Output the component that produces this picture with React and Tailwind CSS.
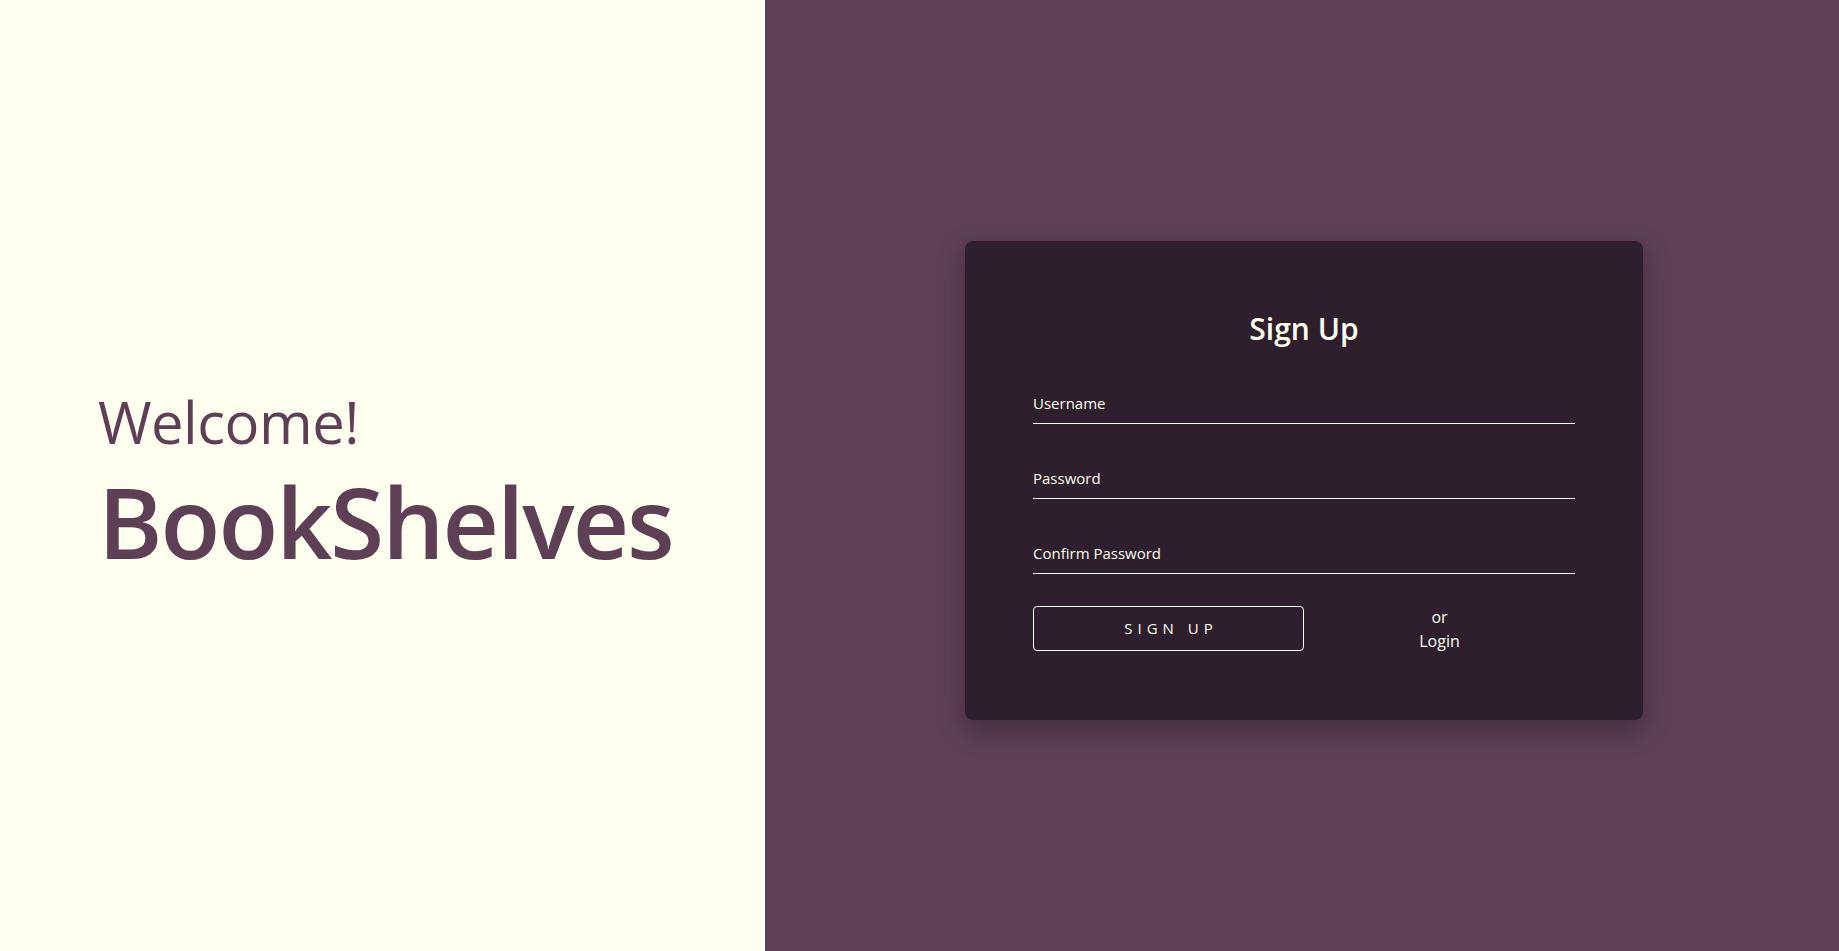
import { useState } from "react";

const Field = ({ name, type, placeholder }) => {
  return (
    <div className="mb-[35px]">
      <input
        className="block w-full h-[40px] bg-transparent border-b border-[#fffff0] text-[15px] text-[#fffff0] placeholder:text-[#fffff0] outline-none"
        name={name}
        type={type}
        placeholder={placeholder}
      />
    </div>
  );
};

const App = () => {
  const [form, setForm] = useState({});

  const handleSubmit = (e) => {
    e.preventDefault();
    setForm({ username: e.target.username.value });
  };

  return (
    <div
      className="flex w-full h-screen"
      style={{ fontFamily: '"Open Sans", "Noto Sans", sans-serif' }}
    >
      {/* left welcome panel */}
      <div className="w-[765px] shrink-0 h-full bg-[#fffff0] flex flex-col justify-center pl-[98px] text-[#5d4054]">
        <h2 className="text-[58px] font-normal leading-[1.2] mt-[16px] tracking-[-0.5px]">Welcome!</h2>
        <h1 className="text-[98px] font-semibold leading-[1.2] mt-[6px] tracking-[-2px]">
          BookShelves
        </h1>
      </div>

      {/* right form panel */}
      <div className="flex-1 h-full bg-[#5d4054] flex items-center justify-center">
        <div className="w-[678px] ml-[4px] mt-[9px] bg-[#2d1f2b] rounded-[8px] px-[68px] pt-[67px] pb-[67px] shadow-[0_10px_28px_rgba(0,0,0,0.3)] text-[#fffff0]">
          <form onSubmit={handleSubmit}>
            <h3 className="text-[30px] font-semibold text-center leading-[42px] mb-[34px]">
              Sign Up
            </h3>
            <Field name="username" type="text" placeholder="Username" />
            <Field name="password" type="password" placeholder="Password" />
            <Field name="confirm" type="password" placeholder="Confirm Password" />
            <div className="grid grid-cols-2 items-center mt-[-4px]">
              <button
                type="submit"
                className="w-[271px] h-[45px] border border-[#fffff0] rounded-[4px] text-[15px] tracking-[5px] pl-[5px]"
              >
                SIGN UP
              </button>
              <div className="text-center text-[16px] leading-[24px]">
                <p>or</p>
                <a className="cursor-pointer">Login</a>
              </div>
            </div>
          </form>
        </div>
      </div>
    </div>
  );
};

export default App;
